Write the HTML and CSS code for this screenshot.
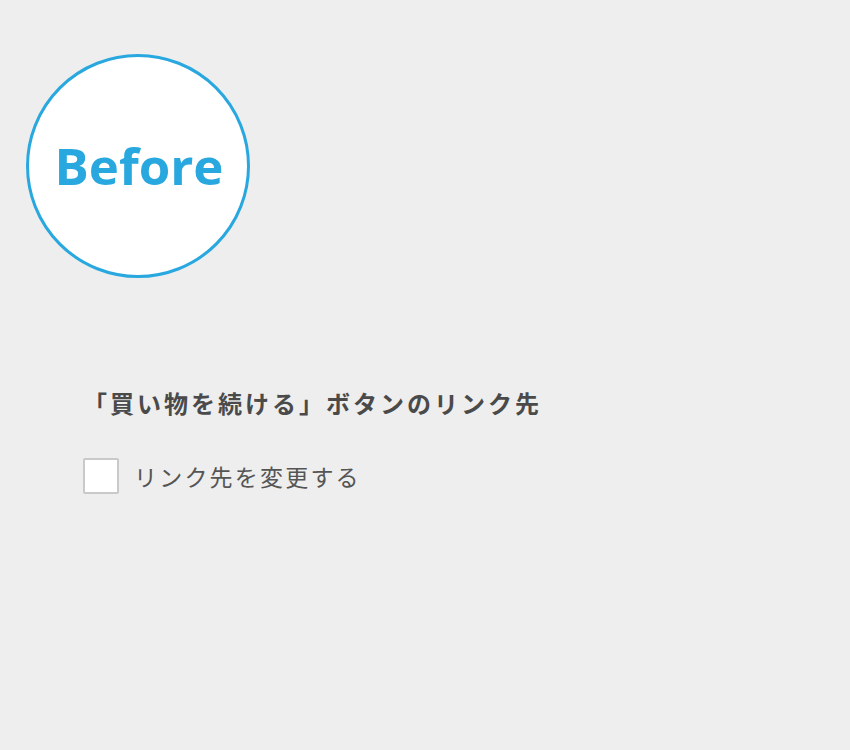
FILE: index.html
```html
<!DOCTYPE html>
<html lang="ja">
<head>
<meta charset="UTF-8" />
<meta name="viewport" content="width=device-width, initial-scale=1" />
<title>Before</title>
<link rel="stylesheet" href="styles.css">
</head>
<body>
  <div class="page">
    <div class="badge">Before</div>

    <div class="setting">
      <h2 class="setting-title">「買い物を続ける」ボタンのリンク先</h2>
      <label class="setting-option">
        <span class="checkbox"></span>
        <span>リンク先を変更する</span>
      </label>
    </div>
  </div>
</body>
</html>
```

FILE: styles.css
```css
body {
  margin: 0;
  background: #eeeeee;
  font-family: "Noto Sans CJK JP", "Noto Sans", sans-serif;
}
.page {
  width: 850px;
  height: 750px;
  padding: 54px 0 0 26px;
  box-sizing: border-box;
}
.badge {
  width: 224px;
  height: 224px;
  box-sizing: border-box;
  border: 3px solid #29a8e0;
  border-radius: 50%;
  background: white;
  display: flex;
  justify-content: center;
  align-items: center;
  color: #29a8e0;
  font-family: "Open Sans", sans-serif;
  font-weight: bold;
  font-size: 51px;
  padding: 0 0 2px 2px;
}
.setting {
  margin: 107px 0 0 57px;
}
.setting-title {
  margin: 0;
  font-size: 24px;
  font-weight: 600;
  letter-spacing: 3px;
  color: #4a4a4a;
  line-height: 36px;
}
.setting-option {
  display: flex;
  align-items: center;
  gap: 15px;
  margin-top: 37px;
  font-size: 23px;
  letter-spacing: 2.2px;
  color: #555555;
}
.checkbox {
  width: 32px;
  height: 32px;
  border: 2px solid #c9c9c9;
  border-radius: 2px;
  background: white;
}
```
